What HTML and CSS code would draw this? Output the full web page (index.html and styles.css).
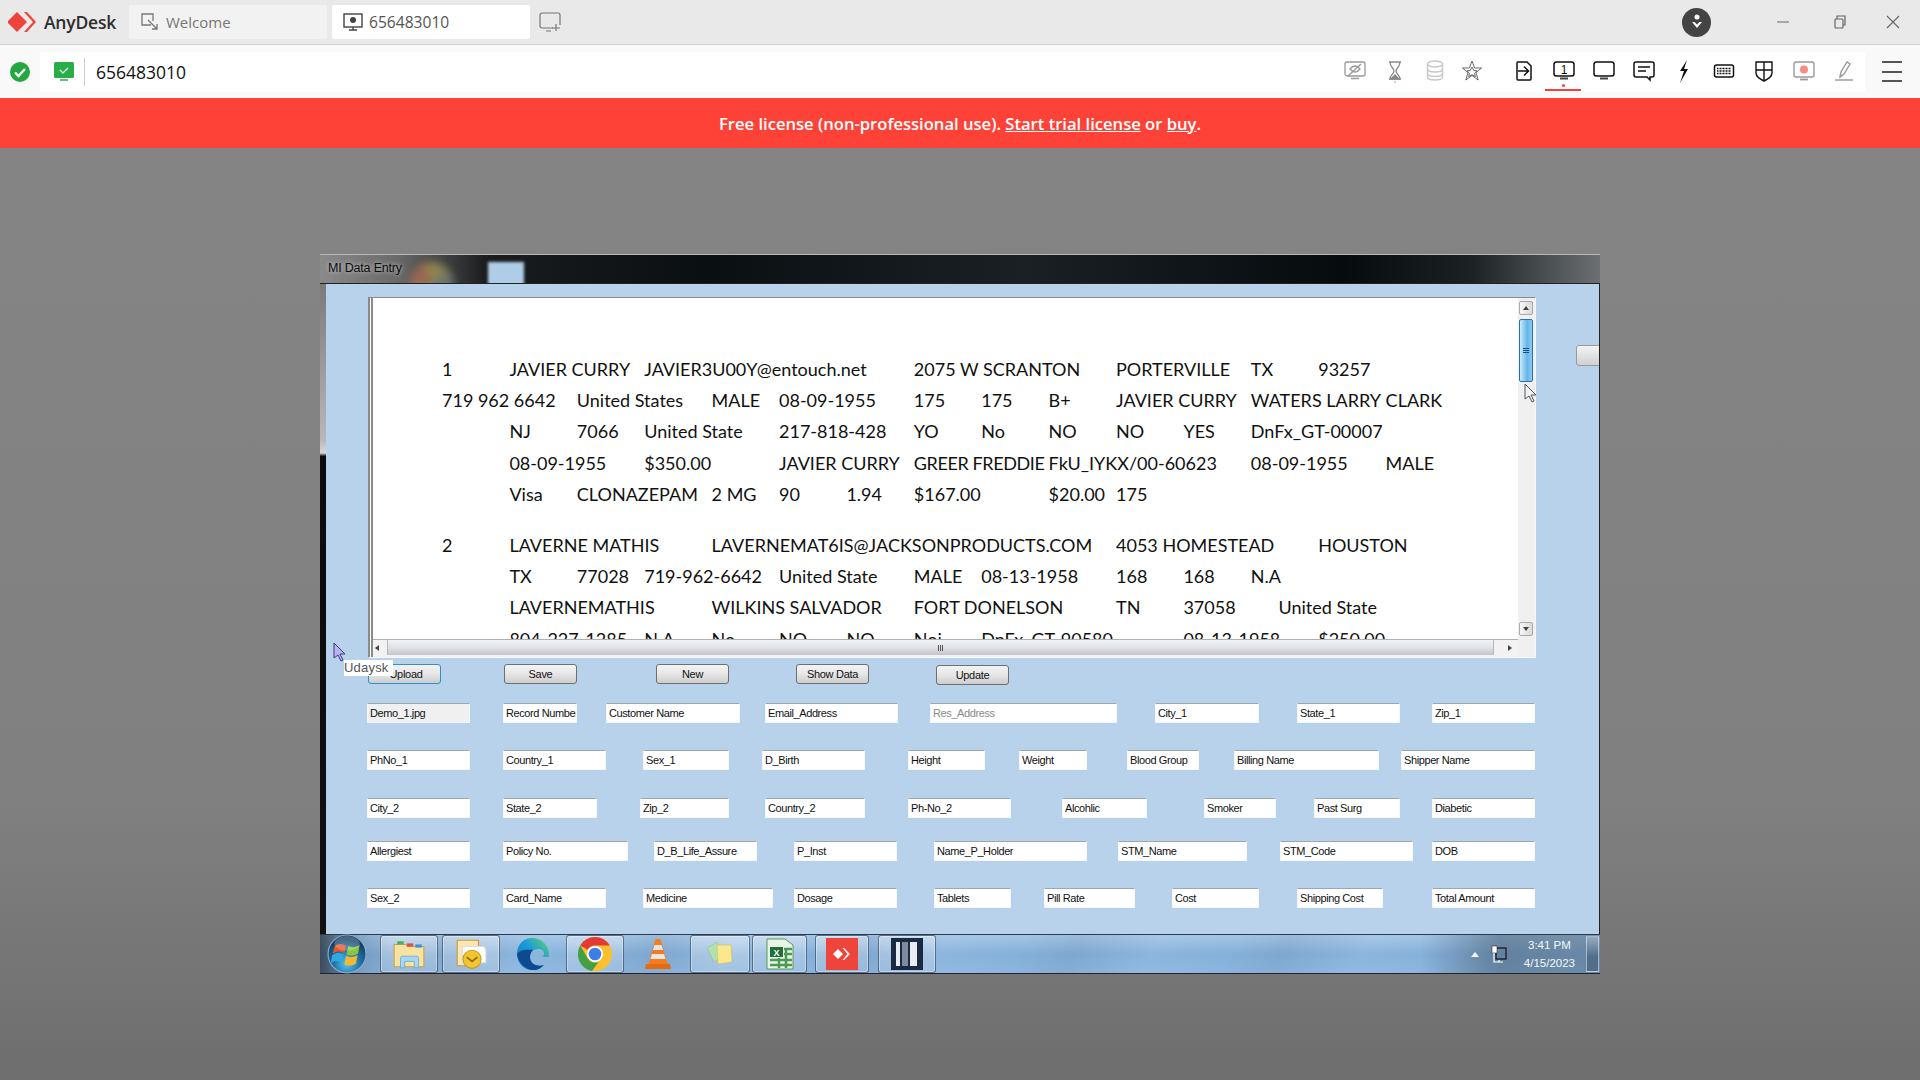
FILE: index.html
```html
<!DOCTYPE html>
<html lang="en">
<head>
    <meta charset="UTF-8">
    <title>AnyDesk - 656483010</title>
    <link rel="stylesheet" href="styles.css">
</head>
<body>
    <header class="topbar">
        <svg class="logo" width="30" height="22" viewBox="0 0 30 22"><path d="M9 1l10 10-10 10L-1 11z" fill="#ef443b"/><path d="M19 1l9 10-9 10h-3l9-10-9-10z" fill="#ef443b"/></svg>
        <span class="brand">AnyDesk</span>
        <div class="tab tab-off">
            <svg width="20" height="20" viewBox="0 0 20 20" fill="none" stroke="#777" stroke-width="1.3"><path d="M11 13H2V2h11v7"/><path d="M8 8l9 9M17 12v5h-5"/></svg>
            <span>Welcome</span>
        </div>
        <div class="tab tab-on">
            <svg width="20" height="20" viewBox="0 0 20 20" fill="none" stroke="#444" stroke-width="1.4"><rect x="1" y="2" width="18" height="13"/><circle cx="10" cy="8" r="3" fill="#444" stroke="none"/><path d="M10 15v3M6 18h8"/></svg>
            <span>656483010</span>
        </div>
        <svg class="newtab" width="22" height="20" viewBox="0 0 22 20" fill="none" stroke="#777" stroke-width="1.2"><path d="M14 16H3a2 2 0 0 1-2-2V3a2 2 0 0 1 2-2h16a2 2 0 0 1 2 2v10"/><path d="M17 12v7M13 16h8M7 19h5"/></svg>
        <div class="profile"><svg width="12" height="16" viewBox="0 0 12 16" fill="#fff"><circle cx="6" cy="3" r="2.5"/><path d="M1 8h2.5L6 10.500 8.500 8H11l-5 6z"/></svg></div>
        <svg class="winctl ctl-min" width="12" height="12" viewBox="0 0 12 12" stroke="#666" stroke-width="1"><path d="M0 6h12"/></svg>
        <svg class="winctl ctl-max" width="12" height="14" viewBox="0 0 12 14" fill="none" stroke="#666" stroke-width="1.2"><rect x="1" y="4" width="8" height="9" rx="1"/><path d="M3 4V1h8v9H9"/></svg>
        <svg class="winctl ctl-close" width="14" height="14" viewBox="0 0 14 14" stroke="#666" stroke-width="1.100"><path d="M1 1l12 12M13 1L1 13"/></svg>
    </header>

    <div class="toolbar">
        <svg class="conn" width="20" height="20" viewBox="0 0 20 20"><circle cx="10" cy="10" r="10" fill="#22a83f"/><path d="M5 10.500l3.500 3.500L15 7" fill="none" stroke="#fff" stroke-width="2.400"/></svg>
        <div class="addr">
            <svg class="addr-mon" width="20" height="20" viewBox="0 0 20 20"><rect y="0" width="20" height="16" rx="1.500" fill="#27ae48"/><rect x="6" y="17" width="8" height="2" fill="#5cc276"/><path d="M6 8l3 3 5-5" fill="none" stroke="#fff" stroke-width="1.200"/></svg>
            <span class="addr-text">656483010</span>
            <div class="tools">
                <div class="tool"><svg width="24" height="24" viewBox="0 0 24 24" fill="none" stroke="#999" stroke-width="1.300"><rect x="2" y="3" width="20" height="14" rx="2"/><path d="M7 10c3-4 7-4 10 0-3 4-7 4-10 0zM18 5L5 17M8 19.500h8"/></svg></div>
                <div class="tool"><svg width="24" height="24" viewBox="0 0 24 24" fill="none" stroke="#888" stroke-width="1.300"><path d="M6 3h12M6 20h12M7 3c0 5 4 6 4 9s-4 4-4 8M17 3c0 5-4 6-4 9s4 4 4 8"/><path d="M8 20l4-4 4 4z" fill="#888"/><circle cx="12" cy="23" r="1" fill="#f7b6b2" stroke="none"/></svg></div>
                <div class="tool"><svg width="24" height="24" viewBox="0 0 24 24" fill="none" stroke="#c8c8c8" stroke-width="1.500"><ellipse cx="12" cy="5" rx="7.500" ry="3"/><path d="M4.500 5v13c0 4 15 4 15 0V5M4.500 10c0 4 15 4 15 0M4.500 14.500c0 4 15 4 15 0"/></svg></div>
                <div class="tool tool-star"><svg width="24" height="24" viewBox="0 0 24 24" fill="none" stroke="#444" stroke-width=".8"><path d="M12 2l2.600 7h7l-5.600 4.500 2.200 7.500L12 16.500 5.800 21 8 13.500 2.400 9h7z"/><path d="M12 8l1.800 3.500 3.200.2-2.400 2.500.8 3.500-3.400-2-3.400 2 .8-3.500L7 11.700l3.200-.2z"/></svg></div>
                <div class="tool tool-gap"><svg width="24" height="24" viewBox="0 0 24 24" fill="none" stroke="#111" stroke-width="1.500"><path d="M5 4a1 1 0 0 1 1-1h9l4 4v13a1 1 0 0 1-1 1H6a1 1 0 0 1-1-1z"/><path d="M6 12h10M12 7.500l4.500 4.500-4.500 4.500"/></svg></div>
                <div class="tool tool-on"><svg width="24" height="24" viewBox="0 0 24 24" fill="none" stroke="#111" stroke-width="1.500"><rect x="2" y="3" width="20" height="14" rx="2.500"/><text x="12" y="15" class="mon-num">1</text><path d="M8 19.500h8" stroke-width="2" stroke="#444"/></svg><i class="tool-dot"></i></div>
                <div class="tool"><svg width="24" height="24" viewBox="0 0 24 24" fill="none" stroke="#111" stroke-width="1.500"><rect x="2" y="3" width="20" height="14" rx="2.500"/><path d="M8 19.500h8" stroke-width="2" stroke="#444"/></svg></div>
                <div class="tool"><svg width="24" height="24" viewBox="0 0 24 24" fill="none" stroke="#111" stroke-width="1.500"><path d="M4 3h16a2 2 0 0 1 2 2v11a2 2 0 0 1-2 2h-2v3l-3-3H4a2 2 0 0 1-2-2V5a2 2 0 0 1 2-2z"/><path d="M6 8h12M6 12h8"/></svg></div>
                <div class="tool"><svg width="24" height="24" viewBox="0 0 24 24"><path d="M15 1L8 12h4L8 24l8-14h-4z" fill="#111"/></svg></div>
                <div class="tool"><svg width="24" height="24" viewBox="0 0 24 24" fill="none" stroke="#111"><rect x="2.500" y="6" width="19" height="12" rx="2" stroke-width="1.500"/><path d="M5 9.500h14M5 12h14M5 14.500h14" stroke-width="1.600" stroke-dasharray="1 .5"/></svg></div>
                <div class="tool"><svg width="24" height="24" viewBox="0 0 24 24" fill="none" stroke="#111" stroke-width="1.400"><path d="M4 3h16v11c0 4-4 6-8 8-4-2-8-4-8-8zM12 3v19M4 11h16"/></svg></div>
                <div class="tool"><svg width="24" height="24" viewBox="0 0 24 24" fill="none" stroke="#999" stroke-width="1.400"><rect x="2" y="3" width="20" height="15" rx="2"/><circle cx="12" cy="10.500" r="4" fill="#f58b86" stroke="none"/><path d="M8 20.500h8" stroke-width="1.800"/></svg></div>
                <div class="tool"><svg width="24" height="24" viewBox="0 0 24 24" fill="none" stroke="#999" stroke-width="1.400"><path d="M8 18l1-5 6-10 3 2-6 10z"/><path d="M3 21h18"/></svg></div>
            </div>
        </div>
        <div class="menu"><i></i><i></i><i></i></div>
    </div>

    <div class="banner">Free license (non-professional use).&nbsp;<a>Start trial license</a>&nbsp;or&nbsp;<a>buy</a>.</div>

    <main class="desktop">
        <section class="remote">
            <div class="titlebar">
                <span class="title-text">MI Data Entry</span>
                <i class="ghost-chrome"></i>
                <i class="ghost-tile"></i>
            </div>
            <div class="win-body">
                <div class="win-edge"></div>
                <div class="client">
                    <div class="upper">
                        <div class="rich">
                            <div class="doc">
<pre>1&#9;JAVIER CURRY&#9;JAVIER3U00Y@entouch.net&#9;2075 W SCRANTON&#9;PORTERVILLE&#9;TX&#9;93257
719 962 6642&#9;United States&#9;MALE&#9;08-09-1955&#9;175&#9;175&#9;B+&#9;JAVIER CURRY&#9;WATERS LARRY&#9;CLARK
&#9;NJ&#9;7066&#9;United State&#9;217-818-428&#9;YO&#9;No&#9;NO&#9;NO&#9;YES&#9;DnFx_GT-00007
&#9;08-09-1955&#9;$350.00&#9;JAVIER CURRY&#9;<span class="tight">GREER FREDDIE</span>&#9;FkU_IYKX/00-60623&#9;08-09-1955&#9;MALE
&#9;Visa&#9;CLONAZEPAM&#9;2 MG&#9;90&#9;1.94&#9;$167.00&#9;$20.00&#9;175</pre>
<pre class="rec-two">2&#9;LAVERNE MATHIS&#9;LAVERNEMAT6IS@JACKSONPRODUCTS.COM&#9;4053 HOMESTEAD&#9;HOUSTON
&#9;TX&#9;77028&#9;719-962-6642&#9;United State&#9;MALE&#9;08-13-1958&#9;168&#9;168&#9;N.A
&#9;LAVERNEMATHIS&#9;WILKINS SALVADOR&#9;FORT DONELSON&#9;TN&#9;37058&#9;      United State
&#9;804-227-1285&#9;N.A&#9;No&#9;NO&#9;NO&#9;Noi&#9;DnFx_GT-90580&#9;&#9;08-13-1958&#9;$250.00</pre>
                            </div>
                            <div class="vbar">
                                <span class="sb-btn"><svg width="6" height="4" viewBox="0 0 6 4"><path d="M3 0l3 4H0z" fill="#444"/></svg></span>
                                <span class="sb-thumb"><i></i><i></i><i></i></span>
                                <span class="sb-btn sb-down"><svg width="6" height="4" viewBox="0 0 6 4"><path d="M3 4l3-4H0z" fill="#444"/></svg></span>
                            </div>
                            <div class="hbar">
                                <span class="h-arrow"><svg width="4" height="6" viewBox="0 0 4 6"><path d="M0 3l4-3v6z" fill="#444"/></svg></span>
                                <span class="h-thumb"><i></i><i></i><i></i></span>
                                <span class="h-arrow"><svg width="4" height="6" viewBox="0 0 4 6"><path d="M4 3L0 0v6z" fill="#444"/></svg></span>
                            </div>
                            <div class="corner"></div>
                        </div>
                        <span class="stub"></span>
                    </div>

                    <div class="actions">
                        <button class="btn btn-upload">Upload</button>
                        <button class="btn btn-save">Save</button>
                        <button class="btn btn-new">New</button>
                        <button class="btn btn-show">Show Data</button>
                        <button class="btn btn-update">Update</button>
                    </div>

                    <div class="row r1">
                        <div class="fld f-demo">Demo_1.jpg</div>
                        <div class="fld f-record">Record Number</div>
                        <div class="fld f-customer">Customer Name</div>
                        <div class="fld f-email">Email_Address</div>
                        <div class="fld f-res">Res_Address</div>
                        <div class="fld f-city1">City_1</div>
                        <div class="fld f-state1">State_1</div>
                        <div class="fld f-zip1">Zip_1</div>
                    </div>
                    <div class="row r2">
                        <div class="fld f-phno">PhNo_1</div>
                        <div class="fld f-country1">Country_1</div>
                        <div class="fld f-sex1">Sex_1</div>
                        <div class="fld f-birth">D_Birth</div>
                        <div class="fld f-height">Height</div>
                        <div class="fld f-weight">Weight</div>
                        <div class="fld f-blood">Blood Group</div>
                        <div class="fld f-billing">Billing Name</div>
                        <div class="fld f-shipper">Shipper Name</div>
                    </div>
                    <div class="row r3">
                        <div class="fld f-city2">City_2</div>
                        <div class="fld f-state2">State_2</div>
                        <div class="fld f-zip2">Zip_2</div>
                        <div class="fld f-country2">Country_2</div>
                        <div class="fld f-phno2">Ph-No_2</div>
                        <div class="fld f-alcohol">Alcohlic</div>
                        <div class="fld f-smoker">Smoker</div>
                        <div class="fld f-surg">Past Surg</div>
                        <div class="fld f-diabetic">Diabetic</div>
                    </div>
                    <div class="row r4">
                        <div class="fld f-allergy">Allergiest</div>
                        <div class="fld f-policy">Policy No.</div>
                        <div class="fld f-life">D_B_Life_Assure</div>
                        <div class="fld f-inst">P_Inst</div>
                        <div class="fld f-holder">Name_P_Holder</div>
                        <div class="fld f-stmname">STM_Name</div>
                        <div class="fld f-stmcode">STM_Code</div>
                        <div class="fld f-dob">DOB</div>
                    </div>
                    <div class="row r5">
                        <div class="fld f-sex2">Sex_2</div>
                        <div class="fld f-card">Card_Name</div>
                        <div class="fld f-medicine">Medicine</div>
                        <div class="fld f-dosage">Dosage</div>
                        <div class="fld f-tablets">Tablets</div>
                        <div class="fld f-pill">Pill Rate</div>
                        <div class="fld f-cost">Cost</div>
                        <div class="fld f-shipping">Shipping Cost</div>
                        <div class="fld f-total">Total Amount</div>
                    </div>

                    <span class="tooltip">Udaysk</span>
                    <svg class="cur cur-scroll" width="13" height="20" viewBox="0 0 13 20"><path d="M1 1v15l4-3 3 6 2-1-3-6h5z" fill="#eef3f8" stroke="#555"/></svg>
                    <svg class="cur cur-hand" width="13" height="20" viewBox="0 0 13 20"><path d="M1 1v15l4-3 3 6 2-1-3-6h5z" fill="#b9b4ee" stroke="#3a3a80"/></svg>
                </div>
            </div>
            <footer class="taskbar">
                <div class="orb-slot">
                    <svg width="40" height="40" viewBox="0 0 38 38">
                        <defs>
                            <radialGradient id="orb" cx="50%" cy="75%" r="65%"><stop offset="0" stop-color="#56c8f2"/><stop offset=".55" stop-color="#1f6fa8"/><stop offset="1" stop-color="#123f60"/></radialGradient>
                            <linearGradient id="edgefill" x1="0" y1="1" x2="1" y2="0"><stop offset="0" stop-color="#1070c4"/><stop offset=".55" stop-color="#1a9bd8"/><stop offset="1" stop-color="#63d86a"/></linearGradient>
                        </defs>
                        <circle cx="19" cy="19" r="18" fill="url(#orb)" stroke="#8fb0c8"/>
                        <path d="M7 12c3-3 7-3 11-1l-1.500 7c-4-2-7-2-11 .5z" fill="#e8562c"/>
                        <path d="M20 11.500c4 1.500 7 1.500 11-1l-1.500 8c-4 2.500-7 2.500-11 1z" fill="#8cc63f"/>
                        <path d="M5 20c4-2.500 7-2.500 11-.5L14.500 27c-4-2-7-2-11 .5z" fill="#30a8e0"/>
                        <path d="M18 21c4 1.500 7 1.500 11-1l-1.500 8c-4 2.500-7 2.500-11 1z" fill="#f5b82e"/>
                        <ellipse cx="19" cy="9" rx="12" ry="7" fill="#fff" opacity=".22"/>
                    </svg>
                </div>
                <div class="task t-box t-folder"><svg width="34" height="34" viewBox="0 0 32 32"><path d="M2 7h11l2 2h15v19H2z" fill="#f7e3a0" stroke="#c9a24a"/><rect x="5" y="4" width="6" height="3" fill="#4caf50"/><rect x="14" y="6" width="6" height="3" fill="#d9534f"/><rect x="22" y="7" width="6" height="3" fill="#3f8fe0"/><path d="M8 29v-9a2 2 0 0 1 2-2h13a2 2 0 0 1 2 2v9h-4v-6H12v6z" fill="#a5d5f2" stroke="#5fa5d0" stroke-width=".7"/></svg></div>
                <div class="task t-box t-mail"><svg width="34" height="34" viewBox="0 0 32 32"><path d="M3 3h20v24H3z" fill="#fbe6b0" stroke="#c79a36"/><path d="M8 9l20 0 2 3v12l-22 2z" fill="#fff" stroke="#ddd"/><circle cx="17" cy="21" r="8.500" fill="#f2c531" stroke="#c79a1f"/><path d="M12 19l5 4 5-4" fill="none" stroke="#8a6a10" stroke-width="1.500"/></svg></div>
                <div class="task t-edge"><svg width="34" height="34" viewBox="0 0 34 34"><path d="M33 20C34 9 26 1 16 1 7 1 1 8 1 17c0 9 7 16 15 16 5 0 9-2 12-5-5 2-13 0-14-7-1-5 3-9 8-9 4 0 6 2 6 5 0 1-1 2-1 3z" fill="url(#edgefill)"/><path d="M1 17c1 8 8 16 17 16 4 0 7-2 10-5-6 2-14 0-14-8 0-3 1-5 3-7-7-1-14 0-16 4z" fill="#0f4a91"/></svg></div>
                <div class="task t-box t-chrome"><svg width="34" height="34" viewBox="-17 -17 34 34"><circle r="17" fill="#fbc02d"/><path d="M0-17A17 17 0 0 1 14.700-8.500H0a8.500 8.500 0 0 0-7.400 4.200L-14.700-8.500A17 17 0 0 1 0-17z" fill="#e53935"/><path d="M-14.700-8.500L-7.400 4.200A8.500 8.500 0 0 0 3.500 8L-3 17A17 17 0 0 1-14.700-8.500z" fill="#43a047"/><circle r="8" fill="#fff"/><circle r="6.300" fill="#3d7fe6"/></svg></div>
                <div class="task t-vlc"><svg width="26" height="34" viewBox="0 0 26 34"><path d="M10.500 2h5l7 25h-19z" fill="#f47b20"/><path d="M9.500 8h7l1.500 5H8zM7 17h12l1.500 5h-15z" fill="#e6e6e6"/><path d="M1 27h24l1 5H0z" fill="#e56a10"/></svg></div>
                <div class="task t-box t-notes"><svg width="32" height="32" viewBox="0 0 32 32"><path d="M3 10l10-6 7 14-10 6z" fill="#b4e0b0" stroke="#8cc08a" stroke-width=".6"/><path d="M13 7h14l1 17-14 2z" fill="#fbe88e" stroke="#d0bd5c" stroke-width=".6"/></svg></div>
                <div class="task t-box t-excel"><svg width="30" height="34" viewBox="0 0 30 34"><path d="M2 2h18l8 6v24H2z" fill="#eaf4e6" stroke="#5a9a5a"/><rect x="5" y="10" width="13" height="10" fill="#1e6f3c"/><text x="11.500" y="18.500" class="xl-x">X</text><path d="M19 12h8M19 17h8M5 23h22M5 28h22M14 21v10M21 12v19" stroke="#4a9a55" stroke-width="2.500"/></svg></div>
                <div class="task t-box t-any"><svg width="32" height="32" viewBox="0 0 32 32"><rect width="32" height="32" fill="#ef443b"/><path d="M12 11l5 5-5 5-5-5zM18 10l6 6-6 6h-1.500l5-6-5-6z" fill="#fff"/></svg></div>
                <div class="task t-box t-mi"><svg width="32" height="32" viewBox="0 0 32 32"><rect width="32" height="32" fill="#1a2a44"/><path d="M5 4h4v24H5zM19 4h7v24h-7z" fill="#e8ecf2"/><path d="M11 4h6v24h-6z" fill="#7f8aa0"/></svg></div>
                <div class="tray">
                    <svg width="8" height="5" viewBox="0 0 8 5"><path d="M4 0l4 5H0z" fill="#f4f8fc"/></svg>
                    <svg class="net" width="16" height="18" viewBox="0 0 16 18" fill="none" stroke="#fff" stroke-width="1.200"><rect x="5" y="3" width="10" height="11" stroke="#111"/><rect x="1" y="1" width="5" height="7" fill="#fff" stroke="#333" stroke-width=".6"/><path d="M3 8v9h9M8 15v2" stroke="#fff"/></svg>
                    <div class="clock"><span>3:41 PM</span><span>4/15/2023</span></div>
                    <span class="show-desk"></span>
                </div>
            </footer>
        </section>
    </main>
</body>
</html>
```

FILE: styles.css
```css
html, body {
    margin: 0;
    height: 100%;
}

body {
    display: flex;
    flex-direction: column;
    width: 1920px;
    height: 1080px;
    overflow: hidden;
    font-family: 'Open Sans', sans-serif;
    background-color: #808080;
}

/* anydesk chrome */
.topbar {
    display: flex;
    align-items: center;
    flex: none;
    box-sizing: border-box;
    height: 45px;
    background-color: #e9e9e9;
    border-bottom: 1px solid #d2d2d2;
}

.logo {
    margin-left: 8px;
}

.brand {
    margin-left: 6px;
    width: 85px;
    font-size: 17.500px;
    font-weight: 600;
    color: #2d2d2d;
    letter-spacing: -.2px;
}

.tab {
    display: flex;
    align-items: center;
    box-sizing: border-box;
    width: 198px;
    height: 34px;
    margin-top: -1px;
    padding-left: 11px;
    gap: 6px;
    font-size: 15px;
    border-radius: 2px;
}

.tab-off {
    color: #777;
    background-color: #f2f2f2;
}

.tab-on {
    margin-left: 5px;
    color: #555;
    background-color: #fff;
    font-size: 15.600px;
}

.newtab {
    margin-left: 9px;
}

.profile {
    display: flex;
    align-items: center;
    justify-content: center;
    width: 29px;
    height: 29px;
    margin-left: 1121px;
    border-radius: 50%;
    background-color: #444;
}

.winctl {
    flex: none;
}

.ctl-min {
    margin-left: 66px;
}

.ctl-max {
    margin-left: 45px;
}

.ctl-close {
    margin-left: 40px;
}

.toolbar {
    display: flex;
    align-items: center;
    flex: none;
    box-sizing: border-box;
    height: 53px;
    background-color: #f9f9f9;
}

.conn {
    margin-left: 10px;
}

.addr {
    display: flex;
    align-items: center;
    box-sizing: border-box;
    width: 1825px;
    height: 40px;
    margin-left: 10px;
    background-color: #fff;
    border-radius: 2px;
}

.addr-mon {
    margin: 0 10px 0 14px;
}

.addr-text {
    padding-left: 11px;
    border-left: 1px solid #ccc;
    font-size: 17.500px;
    color: #111;
    line-height: 28px;
}

.tools {
    display: flex;
    margin-left: auto;
    padding-right: 1px;
}

.tool {
    position: relative;
    display: flex;
    align-items: center;
    justify-content: center;
    width: 40px;
    height: 40px;
}

.tool svg {
    margin-top: -2px;
}

.tool-star {
    justify-content: flex-start;
    padding-left: 5px;
    box-sizing: border-box;
}

.tool-gap {
    margin-left: 9px;
}

.tool-on::after {
    content: "";
    position: absolute;
    left: 1px;
    right: 3px;
    bottom: 1px;
    height: 2px;
    background-color: #ef443b;
}

.tool-dot {
    position: absolute;
    left: 18px;
    top: 32px;
    width: 3px;
    height: 3px;
    border-radius: 50%;
    background-color: #ef443b;
}

.mon-num {
    font: 12px 'Liberation Sans', sans-serif;
    fill: #111;
    stroke: none;
    text-anchor: middle;
}

.menu {
    display: flex;
    flex-direction: column;
    justify-content: space-between;
    width: 20px;
    height: 21px;
    margin-left: 17px;
}

.menu i {
    height: 2px;
    background-color: #555;
}

.banner {
    display: flex;
    align-items: center;
    justify-content: center;
    flex: none;
    height: 50px;
    background-color: #ff4238;
    color: #fff;
    font-size: 16.600px;
    font-weight: 600;
}

.banner a {
    text-decoration: underline;
}

.desktop {
    flex: 1;
    display: flex;
    align-items: center;
    justify-content: center;
    background: linear-gradient(180deg, #848484 0%, #808080 70%, #6e6e6e 100%);
}

/* remote screen */
.remote {
    display: flex;
    flex-direction: column;
    width: 1280px;
    height: 720px;
    background-color: #000;
}

.titlebar {
    position: relative;
    flex: none;
    height: 30px;
    box-sizing: border-box;
    border-top: 1px solid #b8b8b8;
    border-bottom: 1px solid #222;
    overflow: hidden;
    background: linear-gradient(90deg, #8a8a8a 0, #6a6a6a 6%, #1a1c1e 13%, #0a0f12 30%, #1a2024 55%, #060b0e 80%, #1c2224 90%, #6b6f71 100%);
}

.title-text {
    position: absolute;
    left: 8px;
    top: 6px;
    font: 12.500px 'Liberation Sans', sans-serif;
    letter-spacing: -.2px;
    color: #0c0c0c;
    text-shadow: 0 0 4px #ddd;
}

.ghost-chrome {
    position: absolute;
    left: 90px;
    top: 7px;
    width: 44px;
    height: 44px;
    border-radius: 50%;
    background: conic-gradient(#c8b34a, #4a7fc8 45%, #c8b34a 60%, #c8604f 85%, #c8b34a);
    filter: blur(4px);
    opacity: .6;
}

.ghost-tile {
    position: absolute;
    left: 168px;
    top: 7px;
    width: 36px;
    height: 24px;
    background-color: #b0cde8;
    filter: blur(1.500px);
}

.win-body {
    flex: 1;
    display: flex;
    min-height: 0;
}

.win-edge {
    flex: none;
    width: 6px;
    background: linear-gradient(180deg, #7a7a7a 0, #b8b8b8 24%, #d8d8d8 26%, #0b0b0b 26.500%, #111 100%);
}

.client {
    position: relative;
    flex: 1;
    box-sizing: border-box;
    padding: 13px 0 0 41px;
    overflow: hidden;
    background-color: #b8d2ec;
    border-right: 1px solid #222;
    font-family: 'Liberation Sans', sans-serif;
}

.upper {
    display: flex;
    align-items: flex-start;
}

.rich {
    display: grid;
    grid-template-columns: 1fr 17px;
    grid-template-rows: 341px 18px;
    flex: none;
    box-sizing: border-box;
    width: 1167px;
    height: 360px;
    margin-left: 1px;
    border-top: 1px solid #8a8a8a;
    border-left: 5px double #8a8a8a;
    background-color: #fff;
    box-shadow: 1px 1px 0 #f2f7fb;
}

.doc {
    box-sizing: border-box;
    padding: 56px 0 0 69px;
    overflow: hidden;
    background-color: #fff;
}

.doc pre {
    margin: 0;
    font: 18px/31.200px Lato, sans-serif;
    color: #111;
    tab-size: 67.400px;
}

.doc .rec-two {
    margin-top: 20px;
}

.tight {
    letter-spacing: -.4px;
}

.vbar {
    display: flex;
    flex-direction: column;
    align-items: flex-start;
    padding: 3px 0 3px 1px;
    background-color: #f0f0f0;
}

.sb-btn {
    display: flex;
    align-items: center;
    justify-content: center;
    flex: none;
    width: 14px;
    height: 14px;
    box-sizing: border-box;
    border: 1px solid #a9a9a9;
    border-radius: 2px;
    background: linear-gradient(90deg, #f8f8f8, #d9d9d9);
}

.sb-down {
    margin-top: auto;
}

.sb-thumb {
    display: flex;
    flex-direction: column;
    align-items: center;
    justify-content: center;
    gap: 1px;
    flex: none;
    width: 14px;
    height: 63px;
    margin-top: 4px;
    box-sizing: border-box;
    border: 1px solid #2f6fa8;
    border-radius: 2px;
    background: linear-gradient(90deg, #cbeafc, #63b5ea 60%, #8ccbf0);
}

.sb-thumb i {
    width: 6px;
    height: 1px;
    background-color: #1f4f78;
}

.hbar {
    display: flex;
    align-items: flex-start;
    background-color: #f2f2f2;
    border-top: 1px solid #b0b0b0;
    box-sizing: border-box;
}

.h-arrow {
    display: flex;
    align-items: center;
    flex: none;
    box-sizing: border-box;
    width: 14px;
    height: 15px;
    padding-left: 2px;
}

.h-arrow:last-child {
    width: 24px;
    padding-left: 14px;
}

.h-thumb {
    flex: 1;
    display: flex;
    align-items: center;
    justify-content: center;
    gap: 1px;
    height: 15px;
    box-sizing: border-box;
    border-right: 1px solid #b8b8bc;
    border-left: 1px solid #b8b8bc;
    background: linear-gradient(180deg, #f2f5f7, #dfe2e6 50%, #c4c5cc);
}

.h-thumb i {
    width: 1px;
    height: 6px;
    background-color: #555;
}

.corner {
    background-color: #f0f0f0;
}

.stub {
    flex: none;
    width: 40px;
    height: 21px;
    margin: 48px 0 0 41px;
    box-sizing: border-box;
    border: 1px solid #9a9a9a;
    border-radius: 3px;
    background: linear-gradient(180deg, #f4f4f4, #d0d0d0);
}

/* form */
.actions {
    display: flex;
    margin-top: 7px;
    padding-left: 1px;
    height: 20px;
}

.btn {
    box-sizing: border-box;
    width: 73px;
    height: 20px;
    padding: 0;
    border: 1px solid #6f6f6f;
    border-radius: 3px;
    background: linear-gradient(180deg, #f3f3f3 0, #e8e8e8 45%, #cdcdcd 100%);
    font: 11px 'Liberation Sans', sans-serif;
    letter-spacing: -.3px;
    color: #111;
}

.btn-upload {
    border-color: #2f8fc8;
    padding-left: 3px;
}

.btn-save {
    margin-left: 63px;
}

.btn-new {
    margin-left: 79px;
}

.btn-show {
    margin-left: 67px;
}

.btn-update {
    margin: 1px 0 0 67px;
}

.row {
    display: flex;
}

.r1 {
    margin-top: 19px;
}

.r2 {
    margin-top: 27px;
}

.r3 {
    margin-top: 28px;
}

.r4 {
    margin-top: 23px;
}

.r5 {
    margin-top: 27px;
}

.fld {
    flex: none;
    box-sizing: border-box;
    height: 20px;
    padding-left: 2px;
    overflow: hidden;
    white-space: nowrap;
    border: 1px solid #f4f8fc;
    border-top-color: #9aa7b3;
    background-color: #fff;
    font-size: 11px;
    line-height: 18px;
    letter-spacing: -.4px;
    color: #111;
}

.f-demo { width: 103px; background-color: #f0f0f0; }
.f-record { width: 74px; margin-left: 33px; }
.f-customer { width: 134px; margin-left: 29px; }
.f-email { width: 133px; margin-left: 25px; }
.f-res { width: 187px; margin-left: 32px; color: #8a8a8a; }
.f-city1 { width: 104px; margin-left: 38px; }
.f-state1 { width: 103px; margin-left: 38px; }
.f-zip1 { width: 103px; margin-left: 32px; }

.f-phno { width: 103px; }
.f-country1 { width: 103px; margin-left: 33px; }
.f-sex1 { width: 86px; margin-left: 37px; }
.f-birth { width: 103px; margin-left: 33px; }
.f-height { width: 77px; margin-left: 43px; }
.f-weight { width: 68px; margin-left: 34px; }
.f-blood { width: 72px; margin-left: 40px; }
.f-billing { width: 145px; margin-left: 35px; }
.f-shipper { width: 134px; margin-left: 22px; }

.f-city2 { width: 103px; }
.f-state2 { width: 94px; margin-left: 33px; }
.f-zip2 { width: 89px; margin-left: 43px; }
.f-country2 { width: 100px; margin-left: 36px; }
.f-phno2 { width: 103px; margin-left: 43px; }
.f-alcohol { width: 85px; margin-left: 51px; }
.f-smoker { width: 72px; margin-left: 57px; }
.f-surg { width: 86px; margin-left: 38px; }
.f-diabetic { width: 103px; margin-left: 32px; }

.f-allergy { width: 103px; }
.f-policy { width: 125px; margin-left: 33px; }
.f-life { width: 103px; margin-left: 26px; }
.f-inst { width: 103px; margin-left: 37px; }
.f-holder { width: 153px; margin-left: 37px; }
.f-stmname { width: 129px; margin-left: 31px; }
.f-stmcode { width: 133px; margin-left: 33px; }
.f-dob { width: 103px; margin-left: 19px; }

.f-sex2 { width: 103px; }
.f-card { width: 103px; margin-left: 33px; }
.f-medicine { width: 130px; margin-left: 37px; }
.f-dosage { width: 103px; margin-left: 21px; }
.f-tablets { width: 77px; margin-left: 37px; }
.f-pill { width: 91px; margin-left: 33px; }
.f-cost { width: 87px; margin-left: 37px; }
.f-shipping { width: 86px; margin-left: 38px; }
.f-total { width: 103px; margin-left: 49px; }

.tooltip {
    position: absolute;
    left: 18px;
    top: 376px;
    width: 49px;
    height: 16px;
    background-color: #fff;
    font-size: 13px;
    line-height: 15px;
    color: #555;
    letter-spacing: .2px;
}

.cur {
    position: absolute;
}

.cur-scroll {
    left: 1198px;
    top: 99px;
}

.cur-hand {
    left: 7px;
    top: 358px;
}

/* win7 taskbar */
.taskbar {
    display: flex;
    align-items: center;
    flex: none;
    height: 40px;
    box-sizing: border-box;
    border-top: 1px solid #2a3c4c;
    border-bottom: 1px solid #223;
    background:
        linear-gradient(90deg, rgba(30, 40, 50, .75) 0, rgba(90, 120, 150, .4) 40px, rgba(0, 0, 0, 0) 80px, rgba(0, 0, 0, 0) 1100px, rgba(60, 80, 100, .45) 1180px),
        repeating-linear-gradient(115deg, rgba(255, 255, 255, .06) 0, rgba(255, 255, 255, 0) 70px, rgba(0, 0, 0, .05) 120px, rgba(255, 255, 255, .05) 190px),
        linear-gradient(180deg, #a3c5e6, #85b0da 50%, #8db6de);
}

.orb-slot {
    display: flex;
    align-items: center;
    justify-content: center;
    flex: none;
    width: 54px;
    margin-right: 6px;
}

.task {
    display: flex;
    align-items: center;
    justify-content: center;
    flex: none;
    box-sizing: border-box;
    width: 58px;
    height: 38px;
    margin-right: 4px;
    border-radius: 3px;
}

.t-box {
    border: 1px solid rgba(40, 60, 85, .65);
    box-shadow: inset 0 0 0 1px rgba(255, 255, 255, .35);
    background: linear-gradient(180deg, rgba(255, 255, 255, .4), rgba(255, 255, 255, .15));
}

.t-vlc {
    width: 59px;
    margin-right: 3px;
}

.t-notes {
    width: 60px;
    margin-right: 2px;
}

.t-excel {
    width: 55px;
    margin-right: 8px;
}

.t-any {
    width: 54px;
    margin-right: 9px;
}

.xl-x {
    font: bold 9px 'Liberation Sans', sans-serif;
    fill: #fff;
    text-anchor: middle;
}

.tray {
    display: flex;
    align-items: center;
    margin-left: auto;
    height: 38px;
    color: #fff;
}

.net {
    margin-left: 12px;
}

.clock {
    display: flex;
    flex-direction: column;
    align-items: center;
    gap: 5px;
    margin-left: 17px;
    font: 11.500px/13px 'Liberation Sans', sans-serif;
    color: #f4f8fc;
}

.show-desk {
    flex: none;
    width: 13px;
    height: 36px;
    margin: 0 1px 0 11px;
    box-sizing: border-box;
    border: 1px solid rgba(230, 240, 250, .55);
    background: linear-gradient(180deg, rgba(255, 255, 255, .25), rgba(40, 60, 85, .35) 60%);
}
```
